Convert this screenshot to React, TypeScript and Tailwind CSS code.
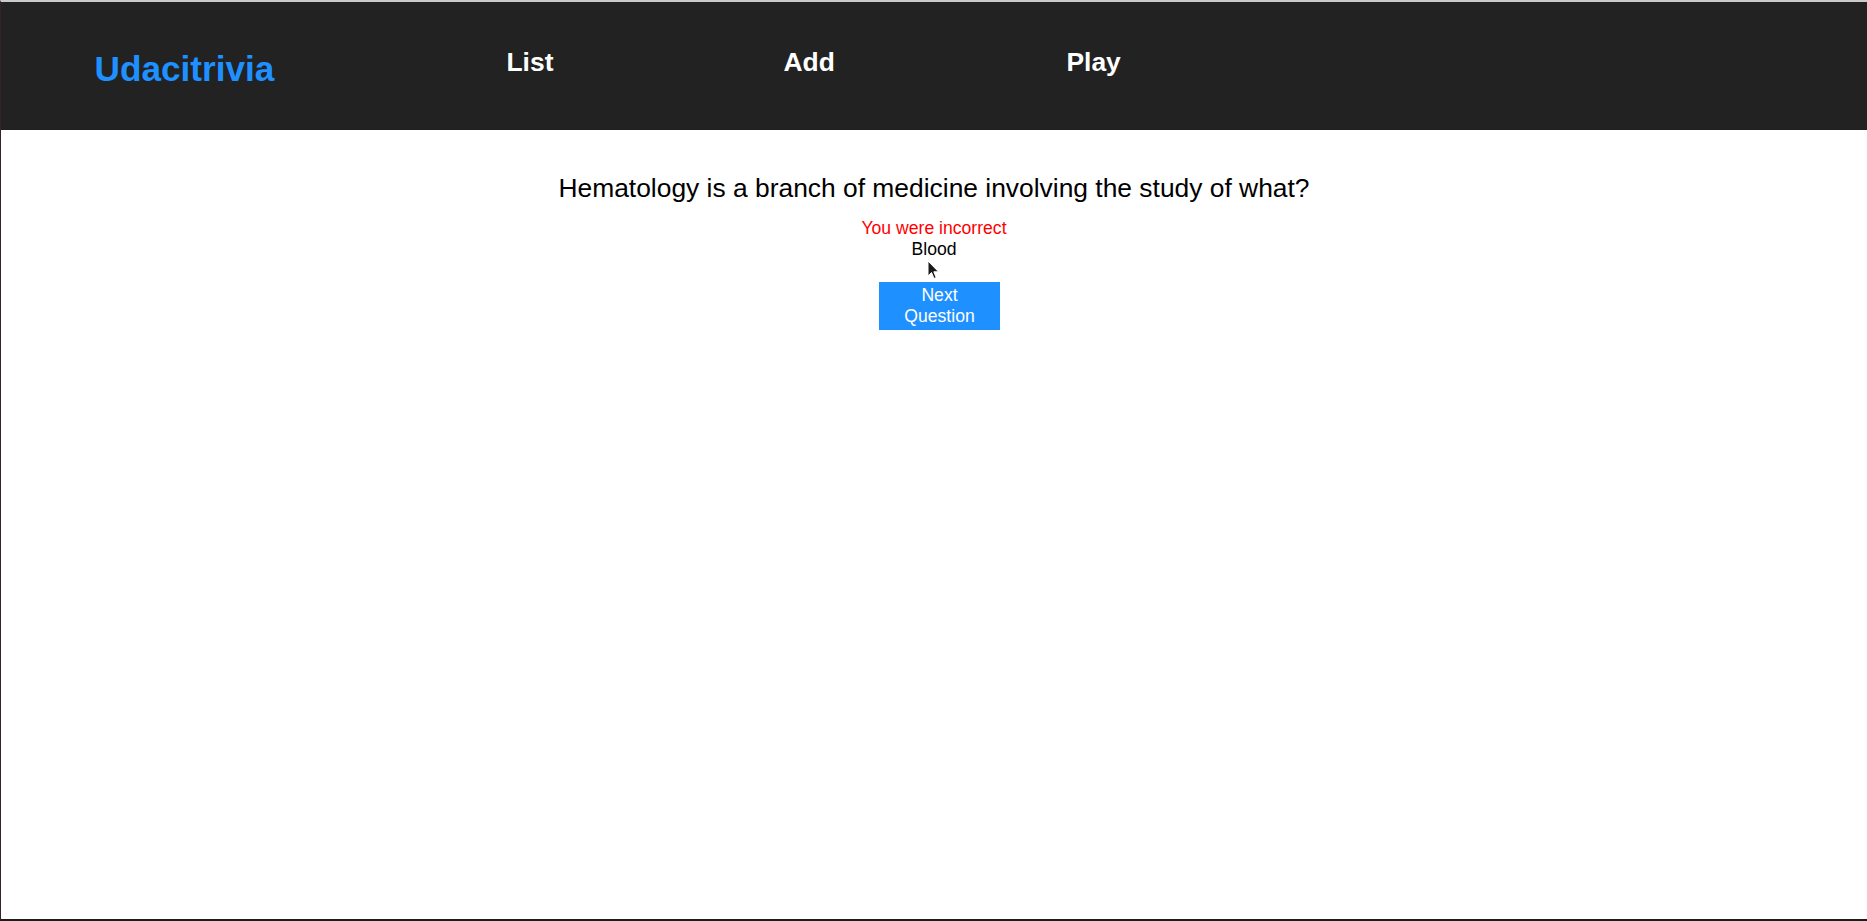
import React from 'react';

const navItems = [
  { label: 'List', width: 'w-[277px]' },
  { label: 'Add', width: 'w-[283px]' },
  { label: 'Play', width: 'w-[200px]' },
];

const App = () => {
  return (
    <div className="h-[921px] flex flex-col bg-white border-t-2 border-t-[#cbcbcb] border-l border-l-[#3a1f2c] border-b-2 border-b-[#1c1c1c] font-['Liberation_Sans',Arial,sans-serif] overflow-hidden">
      <header className="h-[128px] shrink-0 bg-[#222222] flex items-start">
        <div className="w-[505.5px] pl-[93.5px] pt-[49px]">
          <h1 className="text-[35.2px] leading-none font-bold text-[#1e90ff]">Udacitrivia</h1>
        </div>
        {navItems.map((item) => (
          <div key={item.label} className={`${item.width} pt-[46.5px]`}>
            <h2 className="text-[26.4px] leading-none font-bold text-white cursor-pointer">{item.label}</h2>
          </div>
        ))}
      </header>

      <main className="relative flex-1 flex flex-col items-center text-black">
        <div className="mt-[45px] text-[26.4px] leading-none">
          Hematology is a branch of medicine involving the study of what?
        </div>
        <div className="mt-[16.6px] text-[17.6px] leading-[20.5px] text-center">
          <div className="text-[#ff0000]">You were incorrect</div>
          <div>Blood</div>
        </div>
        <button className="mt-[22.5px] ml-[11px] w-[121px] py-[3px] bg-[#1e90ff] text-white text-[17.6px] leading-[21px] text-center">
          Next
          <br />
          Question
        </button>

        {/* mouse pointer visible in the screenshot */}
        <svg
          className="absolute left-[926px] top-[130px]"
          width="13"
          height="20"
          viewBox="0 0 13 20"
        >
          <path
            d="M1 1 L1 16 L4.5 12.5 L7 18.5 L9.2 17.6 L6.8 11.8 L11.5 11.8 Z"
            fill="#1a1a1a"
            stroke="#ffffff"
            strokeWidth="1"
            strokeLinejoin="round"
          />
        </svg>
      </main>
    </div>
  );
};

export default App;
